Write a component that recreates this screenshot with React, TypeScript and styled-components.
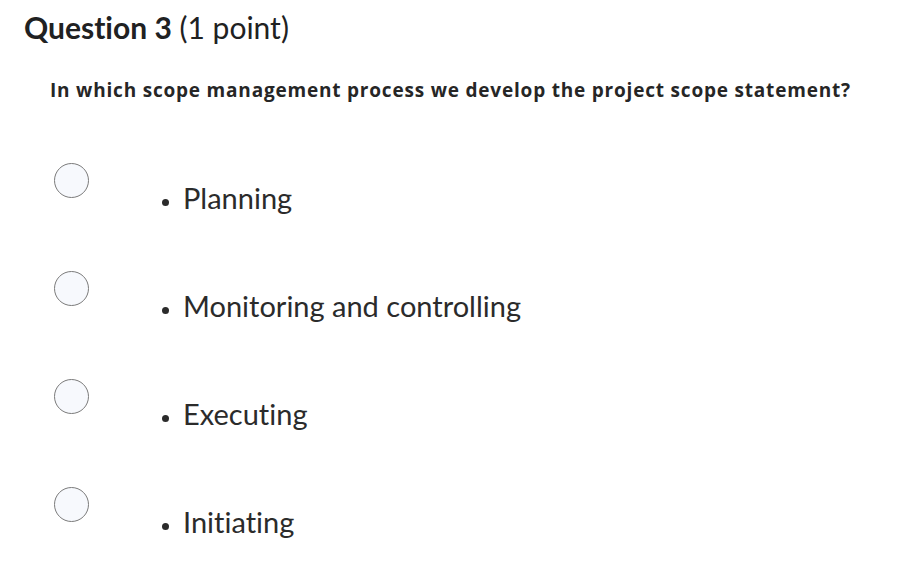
import React from "react";
import styled, { createGlobalStyle } from "styled-components";

const options = ["Planning", "Monitoring and controlling", "Executing", "Initiating"];

function App() {
  return (
    <>
      <GlobalStyle />
      <Page>
        <Title>
          <strong>Question 3</strong> (1 point)
        </Title>
        <Prompt>In which scope management process we develop the project scope statement?</Prompt>
        <Options>
          {options.map((o) => (
            <Option key={o}>
              <Radio />
              <Label>
                <li>{o}</li>
              </Label>
            </Option>
          ))}
        </Options>
      </Page>
    </>
  );
}

export default App;

const GlobalStyle = createGlobalStyle`
  body {
    margin: 0;
    background: #fff;
    font-family: Lato, "Liberation Sans", sans-serif;
    font-variant-ligatures: none;
  }
`;

const Page = styled.div`
  padding: 10px 0 0 24px;
  width: 916px;
  height: 566px;
  box-sizing: border-box;
  overflow: hidden;
`;

const Title = styled.h2`
  margin: 0;
  font-family: Lato, sans-serif;
  font-size: 30px;
  font-weight: 400;
  color: #202122;
  line-height: 34px;
  strong {
    font-weight: 700;
  }
`;

const Prompt = styled.p`
  margin: 34px 0 0 26px;
  font-family: "Open Sans", sans-serif;
  font-weight: 700;
  font-size: 19px;
  letter-spacing: 0.8px;
  color: #262626;
  line-height: 24px;
  white-space: nowrap;
`;

const Options = styled.div`
  margin-top: 61px;
  padding-left: 30px;
  display: flex;
  flex-direction: column;
  gap: 72px;
`;

const Option = styled.div`
  display: flex;
  align-items: flex-start;
  height: 36px;
`;

const Radio = styled.span`
  width: 33px;
  height: 33px;
  border-radius: 50%;
  border: 1.5px solid #7b7b7b;
  background: #f7f9fd;
  flex-shrink: 0;
`;

const Label = styled.ul`
  margin: 17px 0 0;
  padding-left: 94px;
  font-family: Lato, sans-serif;
  font-size: 29px;
  color: #2b2b2b;
  line-height: 36px;
  li {
    margin: 0;
  }
  li::marker {
    font-size: 22px;
  }
`;
